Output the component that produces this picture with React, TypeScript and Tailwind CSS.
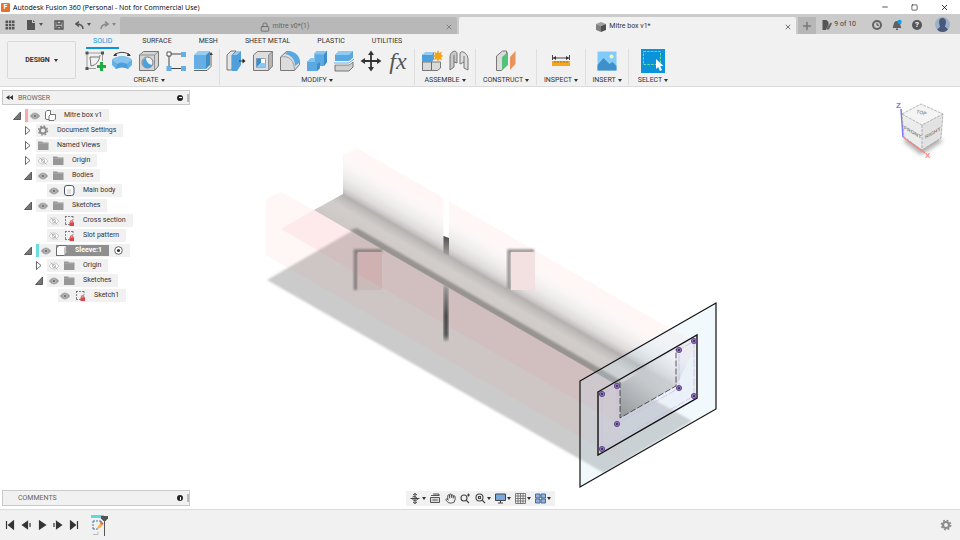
import { ReactNode } from 'react';
import { Hand, Lock, Minus, Plus, Square, X } from 'lucide-react';

const ribbonTabs = ['SOLID', 'SURFACE', 'MESH', 'SHEET METAL', 'PLASTIC', 'UTILITIES'];

function Caret() {
  return (
    <svg viewBox="0 0 4 3" className="h-[3px] w-1 shrink-0" fill="currentColor">
      <path d="M0 0h4L2 3z" />
    </svg>
  );
}

function Icon({ children }: { children: ReactNode }) {
  return (
    <svg viewBox="0 0 22 22" className="size-[22px]" fill="none" stroke="#6b6b6b" strokeWidth="0.9">
      {children}
    </svg>
  );
}

/* Ribbon icons */
const createIcons: [string, ReactNode][] = [
  ['Create Sketch', <Icon>
    <path d="M3.500 3h14M3 4v13M4 18.500h8M18.500 4v7" stroke="#777" strokeWidth="0.7" />
    <path d="M6 7l1 9c5-1 8-4 9-11M6 7h9" stroke="#666" />
    <path d="M1.500 1.500h3v3h-3zM17 1.500h3v3h-3zM1.500 17h3v3h-3z" fill="#555" stroke="none" />
    <path d="M17.500 12v9M13 16.500h9" stroke="#1fae3d" strokeWidth="3" />
  </Icon>],
  ['Revolve', <Icon>
    <path d="M1 10c4-5 16-5 20 0l-4 9c-4-2-8-2-12 0z" fill="#4b9fdc" stroke="none" />
    <path d="M1 10c4-5 16-5 20 0l-5 4c-4-2-7-2-10 0z" fill="#86c4ef" stroke="none" />
    <path d="M1 10l5 4-1 5-4-4zM21 10l-5 4 1 5 4-4z" fill="#66b0e6" stroke="none" />
    <path d="M3 5c5-3.500 11-3.500 16 0" stroke="#333" />
    <path d="M2 6l3-3 1 3zM20 6l-3-3-1 3z" fill="#333" stroke="none" />
  </Icon>],
  ['Hole', <Icon>
    <path d="M1.500 5l4-3.500h15V16l-4 4.500h-15z" fill="#d5d5d5" />
    <path d="M1.500 5h15v15.500M16.500 5l4-3.500" stroke="#888" />
    <circle cx="9.500" cy="12.500" r="5.500" fill="#e9f5fd" />
    <path d="M8 8c0 4 3 7 7 7-2 4-9 4-10 0-1-3 0-6 3-7z" fill="#4b9fdc" stroke="none" />
  </Icon>],
  ['Pattern', <Icon>
    <path d="M4 4h14M4 4v14M4 18.500h14" stroke="#333" />
    <path d="M2 2h4v4H2z" fill="#fff" stroke="#444" />
    <path d="M16 2h5v5h-5zM1.500 16h5v5h-5zM16 16h5v5h-5z" fill="#65afe7" stroke="none" />
  </Icon>],
  ['Extrude', <Icon>
    <path d="M2 20.500h13l4-4V4" stroke="#555" />
    <path d="M17 5l2-3 2 3z" fill="#444" stroke="none" />
    <path d="M2 5l4-4h12l-4 4z" fill="#93cdf3" stroke="none" />
    <path d="M2 5h12v14H2z" fill="#66aee3" stroke="none" />
    <path d="M14 5l4-4v14l-4 4z" fill="#408fc9" stroke="none" />
  </Icon>],
];

const modifyIcons: [string, ReactNode][] = [
  ['Press Pull', <Icon>
    <path d="M2 5l4-4h5L7 5v15H2z" fill="#e4e4e4" />
    <path d="M7 5l5-4h4v14l-4 6H7z" fill="#4f9fda" stroke="none" />
    <path d="M7 5l5-4h4l-4 4z" fill="#8fcbf3" stroke="none" />
    <path d="M14 11h4" stroke="#222" />
    <path d="M17.500 8.500l3 2.500-3 2.500z" fill="#222" stroke="none" />
  </Icon>],
  ['Shell', <Icon>
    <path d="M1.500 5l4-3.500h15V16l-4 4.500h-15z" fill="#dedede" />
    <path d="M16.500 5l4-3.500V16l-4 4.500z" fill="#b5b5b5" stroke="#888" />
    <path d="M4.500 8.500h9v9h-9z" fill="#fff" stroke="#999" />
    <path d="M4.500 8.500H9v4.500l-4.500 4.500z" fill="#3b8fd0" stroke="none" />
    <path d="M9 13h4.500v4.500h-9z" fill="#8ac7ee" stroke="none" />
  </Icon>],
  ['Fillet', <Icon>
    <path d="M1.500 7l6-5.500c7 0 13 5 13 13l-5 6h-14z" fill="#dcdcdc" />
    <path d="M6 4l3-3c7 0 12 5 12 11L16 16c0-7-4-11-10-12z" fill="#5aa8e1" stroke="none" />
    <path d="M1.500 7c9-2 14 4 14 13.500" stroke="#999" />
  </Icon>],
  ['Combine', <Icon>
    <path d="M1 12l4-4h3V4l3-3h10v11l-3 4h-4v2l-3 3H1z" fill="#5ba9e2" stroke="none" />
    <path d="M1 12l4-4h3V4l3-3h10l-3 3.500H9V12z" fill="#85c4ef" stroke="none" />
    <path d="M18 4.500L21 1v11l-3 4zM11 14l3-2v6l-3 3z" fill="#3e8dc9" stroke="none" />
  </Icon>],
  ['Split Body', <Icon>
    <path d="M2 5l4-4h14v7l-4 3H2z" fill="#5aa8e1" stroke="none" />
    <path d="M2 5l4-4h14l-4 4z" fill="#8fcbf3" stroke="none" />
    <path d="M2 15h14l4-3v5l-4 4H2z" fill="#d0d0d0" />
    <path d="M1 13h15l5-4" stroke="#fff" strokeWidth="2.500" />
    <path d="M1 13h15l5-4" stroke="#3e9ce0" />
  </Icon>],
  ['Move', <Icon>
    <path d="M11 3v16M3 11h16" stroke="#333" strokeWidth="1.800" />
    <path d="M11 0.500l3 4.500H8zM11 21.500l3-4.500H8zM0.500 11l4.500-3v6zM21.500 11l-4.500-3v6z" fill="#333" stroke="none" />
  </Icon>],
  ['Change Parameters', <span className="font-['Liberation_Serif',serif] text-2xl leading-[22px] text-[#555] italic">fx</span>],
];

const assembleIcons: [string, ReactNode][] = [
  ['New Component', <Icon>
    <path d="M1.500 12h9v8.500h-9zM10.500 12h9v6l-3 2.500h-6z" fill="#dadada" />
    <path d="M1 5l4-3h8v7l-2 3H1z" fill="#4f9fda" stroke="none" />
    <path d="M1 5l4-3h8l-2 3z" fill="#93cdf3" stroke="none" />
    <path d="M17 0l1.200 3L21 1.800 20 4.500l2.500 1.500L20 7.200l1 3-2.800-1.200L17 12l-1.200-3-2.800 1.200 1-3L11.500 6 14 4.500l-1-2.700L15.800 3z" fill="#f3a21b" stroke="none" />
  </Icon>],
  ['Joint', <Icon>
    <path d="M2 7c0-6 7-8 7-3v9l-3-1v5l-4 3z" fill="#c9c9c9" />
    <path d="M12 4c0-5 8-1 8 5v11l-4-2v-6l-4 2z" fill="#dedede" />
    <path d="M6 5v7M16 6v6" stroke="#666" />
  </Icon>],
];

const constructIcons: [string, ReactNode][] = [
  ['Offset Plane', <Icon>
    <path d="M1.500 6l6-5h4v14l-5 5.500h-5z" fill="#dcdcdc" />
    <path d="M7 7l6-5v13l-6 5.500z" fill="#54c27a" stroke="none" />
    <path d="M15 7l5.500-6v13L15 20z" fill="#e8935e" stroke="none" />
  </Icon>],
];
const inspectIcons: [string, ReactNode][] = [
  ['Measure', <Icon>
    <path d="M2.500 5v5M19.500 5v5M3 8h16" stroke="#333" />
    <path d="M3 8l3-2v4zM19 8l-3-2v4z" fill="#333" stroke="none" />
    <path d="M2 11h18v5H2z" fill="#f5a71d" stroke="none" />
    <path d="M5 11v2M8 11v2M11 11v2M14 11v2M17 11v2" stroke="#a06a08" />
  </Icon>],
];
const insertIcons: [string, ReactNode][] = [
  ['Insert Image', <Icon>
    <path d="M1.500 1.500h19v19h-19z" fill="#82caf8" stroke="none" />
    <path d="M1.500 15l6-7 6 6 3-2 4 4v4.500h-19z" fill="#3f8fca" stroke="none" />
    <circle cx="15.500" cy="6.500" r="2" fill="#fff5b8" stroke="none" />
  </Icon>],
];
const selectIcons: [string, ReactNode][] = [
  ['Select', <svg viewBox="0 0 24 24" className="size-6 shrink-0" fill="none">
    <path d="M0 0h24v24H0z" fill="#0a93d8" />
    <path d="M2.500 2.500h17v13h-17z" stroke="#6fdc9a" strokeDasharray="2.500 1.200" />
    <path d="M15 10v10l2.200-2 1.800 4 2-1-1.800-3.700 3.300-.3z" fill="#fff" />
  </svg>],
];

const ribbonGroups: { label: string; icons: [string, ReactNode][]; width: string }[] = [
  { label: 'CREATE', icons: createIcons, width: 'w-[141px]' },
  { label: 'MODIFY', icons: modifyIcons, width: 'w-[195px]' },
  { label: 'ASSEMBLE', icons: assembleIcons, width: 'w-[61px]' },
  { label: 'CONSTRUCT', icons: constructIcons, width: 'w-[61px]' },
  { label: 'INSPECT', icons: inspectIcons, width: 'w-[49px]' },
  { label: 'INSERT', icons: insertIcons, width: 'w-[43px]' },
  { label: 'SELECT', icons: selectIcons, width: 'w-[48px]' },
];

/* Browser tree icons */
function Eye({ off }: { off?: boolean }) {
  return (
    <svg viewBox="0 0 10 8" className="h-2 w-2.5 shrink-0" fill="none">
      <path d="M0.300 4C2.500 0 7.500 0 9.700 4 7.500 8 2.500 8 0.300 4z" fill={off ? '#fff' : '#a3a3a3'} stroke={off ? '#b3b3b3' : '#a3a3a3'} strokeWidth="0.7" />
      <circle cx="5" cy="4" r="1.700" fill={off ? 'none' : '#777'} stroke={off ? '#aaa' : '#c9c9c9'} strokeWidth="0.7" />
      {off && <path d="M1.500 0.500l7 7" stroke="#aaa" strokeWidth="0.8" />}
    </svg>
  );
}

function NodeIcon({ kind }: { kind: string }) {
  return (
    <svg viewBox="0 0 11 11" className="size-[11px] shrink-0" fill="none">
      {kind === 'folder' && (
        <>
          <path d="M0 1.500h4l1 1h5.500v7.500H0z" fill="#979797" />
          <path d="M0 3.300h10.500" stroke="#bbb" strokeWidth="0.5" />
        </>
      )}
      {kind === 'gear' && (
        <>
          <circle cx="5" cy="5.500" r="3" stroke="#8f8f8f" strokeWidth="2" />
          <circle cx="5" cy="5.500" r="4.500" stroke="#8f8f8f" strokeWidth="1.500" strokeDasharray="1.800 1.734" />
        </>
      )}
      {kind === 'component' && (
        <>
          <path d="M0.500 2L2 0.500h3.500v9H2L0.500 9z" fill="#fff" stroke="#555" strokeWidth="0.8" />
          <path d="M4 6l1.500-1.500h5V9L9 10.500H4z" fill="#fff" stroke="#555" strokeWidth="0.8" />
        </>
      )}
      {kind === 'body' && (
        <>
          <rect x="0.500" y="0.500" width="9.500" height="10" rx="2.500" fill="#fff" stroke="#4a5568" />
          <path d="M3 4h4v5H3z" fill="#e2e2e2" />
        </>
      )}
      {kind === 'box' && (
        <>
          <path d="M0.500 3L3 0.500h7.500v7l-2.500 3H0.500z" fill="#fff" stroke="#555" strokeWidth="0.8" />
          <path d="M8 3l2.500-2.500v7L8 10.500z" fill="#c5c5c5" />
        </>
      )}
      {kind === 'sketch' && (
        <>
          <path d="M1 1.500h8.500M1.500 1v8.500M1 9.500h5M9 1v4" stroke="#666" strokeWidth="0.8" strokeDasharray="2 1" />
          <path d="M5.500 7.300h4.500v3.700H5.500z" fill="#d9474b" />
          <path d="M6.700 7.500V5.800h2.100v1.700" stroke="#d9474b" />
        </>
      )}
    </svg>
  );
}

type Row = { label: string; indent: string; icon: string; arrow?: 'open' | 'closed'; eye?: 'on' | 'off'; bar?: string; active?: boolean };

const rows: Row[] = [
  { label: 'Mitre box v1', indent: 'pl-[11px]', icon: 'component', arrow: 'open', eye: 'on', bar: 'bg-[#f9a9ab]' },
  { label: 'Document Settings', indent: 'pl-[22px]', icon: 'gear', arrow: 'closed' },
  { label: 'Named Views', indent: 'pl-[22px]', icon: 'folder', arrow: 'closed' },
  { label: 'Origin', indent: 'pl-[22px]', icon: 'folder', arrow: 'closed', eye: 'off' },
  { label: 'Bodies', indent: 'pl-[22px]', icon: 'folder', arrow: 'open', eye: 'on' },
  { label: 'Main body', indent: 'pl-[33px]', icon: 'body', eye: 'on' },
  { label: 'Sketches', indent: 'pl-[22px]', icon: 'folder', arrow: 'open', eye: 'on' },
  { label: 'Cross section', indent: 'pl-[33px]', icon: 'sketch', eye: 'off' },
  { label: 'Slot pattern', indent: 'pl-[33px]', icon: 'sketch', eye: 'off' },
  { label: 'Sleeve:1', indent: 'pl-[22px]', icon: 'box', arrow: 'open', eye: 'on', bar: 'bg-[#6bdce0]', active: true },
  { label: 'Origin', indent: 'pl-[33px]', icon: 'folder', arrow: 'closed', eye: 'off' },
  { label: 'Sketches', indent: 'pl-[33px]', icon: 'folder', arrow: 'open', eye: 'on' },
  { label: 'Sketch1', indent: 'pl-11', icon: 'sketch', eye: 'on' },
];

function TreeRow({ row }: { row: Row }) {
  return (
    <li className={`flex h-[15px] items-center ${row.indent}`}>
      <span className="w-3 shrink-0">
        {row.arrow && (
          <svg viewBox="0 0 8 9" className="h-[9px] w-2" fill="none" stroke="#444" strokeWidth="0.8">
            {row.arrow === 'open' ? <path d="M7.500 1v7.500H0.500z" fill="#777" /> : <path d="M1.500 0.500v8L6 4.500z" fill="#fff" />}
          </svg>
        )}
      </span>
      {row.bar && <span className={`h-[13px] w-[3px] shrink-0 ${row.bar}`} />}
      <span className="flex h-[13px] items-center gap-[5px] bg-[#f1f1f1] pr-[7px] pl-0.5">
        {row.eye && <Eye off={row.eye === 'off'} />}
        <span className={row.active ? 'flex h-[11px] items-center gap-2 bg-[#8f8f8f] pr-[7px] font-bold text-white' : 'flex items-center gap-2'}>
          <NodeIcon kind={row.icon} />
          <span>{row.label}</span>
        </span>
        {row.active && (
          <svg viewBox="0 0 9 9" className="size-[9px]">
            <circle cx="4.500" cy="4.500" r="3.800" fill="#fff" stroke="#444" strokeWidth="0.8" />
            <circle cx="4.500" cy="4.500" r="1.600" fill="#333" />
          </svg>
        )}
      </span>
    </li>
  );
}

/* 3D model and sketch plane */
const sketchPoints = [[602, 394], [617, 386], [679, 350], [694, 341], [694, 396], [679, 388], [617, 424], [602, 449]];

function Scene() {
  return (
    <svg viewBox="0 87 960 422" preserveAspectRatio="xMidYMid slice" className="absolute inset-0 size-full" fill="none">
      <defs>
        {/* runs square to the long edges, wall top to floor edge */}
        <linearGradient id="channel" gradientUnits="userSpaceOnUse" x1="343" y1="140" x2="305.300" y2="205.300">
          <stop offset="0" stopColor="#fff6f6" />
          <stop offset="0.190" stopColor="#fff7f7" />
          <stop offset="0.280" stopColor="#faf6f6" />
          <stop offset="0.420" stopColor="#eeebeb" />
          <stop offset="0.530" stopColor="#dfdbdb" />
          <stop offset="0.590" stopColor="#cbc6c6" />
          <stop offset="0.630" stopColor="#b5b1b0" />
          <stop offset="0.690" stopColor="#c2bebb" />
          <stop offset="0.780" stopColor="#d1cdca" />
          <stop offset="0.900" stopColor="#d0cbc8" />
          <stop offset="1" stopColor="#cbc7c4" />
        </linearGradient>
        <linearGradient id="slotTop" x1="0" y1="0" x2="0" y2="1">
          <stop offset="0" stopColor="#4d4d4d" />
          <stop offset="1" stopColor="#a8a4a3" />
        </linearGradient>
        <linearGradient id="slotFront" x1="0" y1="0" x2="0" y2="1">
          <stop offset="0" stopColor="#9d9a99" />
          <stop offset="0.550" stopColor="#474747" />
          <stop offset="0.900" stopColor="#555" />
          <stop offset="1" stopColor="#aaa" />
        </linearGradient>
        <linearGradient id="inside" gradientUnits="userSpaceOnUse" x1="622" y1="410" x2="668" y2="352">
          <stop offset="0" stopColor="#85898b" stopOpacity="0.7" />
          <stop offset="0.500" stopColor="#c0c3c5" stopOpacity="0.6" />
          <stop offset="1" stopColor="#f5f7f9" stopOpacity="0.6" />
        </linearGradient>
        <filter id="soft"><feGaussianBlur stdDeviation="1.200" /></filter>
        <filter id="soft2"><feGaussianBlur stdDeviation="0.8" /></filter>
        <clipPath id="floorEdge"><path d="M314 200H640V398.500L314 210Z" /></clipPath>
      </defs>

      {/* ground shadow */}
      <path d="M267 280L350 232L357 229L364 232L620 381L692 421L604 473Z" fill="#cbcbcb" filter="url(#soft2)" />

      {/* back wall and floor */}
      <path d="M314 210L343 194V155L357 148L697 344L676 386L620 418V387Z" fill="url(#channel)" />
      <g clipPath="url(#floorEdge)">
        <path d="M350 230L357 228L620 380V388L359 237Z" fill="#8c8987" fillOpacity="0.85" filter="url(#soft)" />
      </g>

      {/* front wall, seen through */}
      <path d="M266 199L281 192L314 210L620 387V459L598 447L266 255Z" fill="#ff8080" fillOpacity="0.07" />
      <path d="M281 229L314 210L620 387V425Z" fill="#f07878" fillOpacity="0.09" />

      {/* saw slots */}
      <path d="M443.500 190H449V238L443.500 236Z" fill="#fff" />
      <path d="M443.500 236L449 238V256L443.500 253Z" fill="url(#slotTop)" />
      <path d="M443.500 285L448.500 288V341H443.500Z" fill="url(#slotFront)" filter="url(#soft2)" />
      <path d="M355.500 290V251H382" stroke="#857f7e" strokeWidth="3.500" filter="url(#soft)" />
      <path d="M358 252H382V288L358 275Z" fill="#cfb1b1" />
      <path d="M358 275L382 288V290H358Z" fill="#cbbaba" />
      <path d="M509 289V251H534" stroke="#999494" strokeWidth="3.500" filter="url(#soft)" />
      <path d="M511 252H535V290H511Z" fill="#f3e0e0" />

      {/* construction plane */}
      <path d="M580 381L716 303V409L580 487Z" fill="#c3e4f8" fillOpacity="0.24" />
      <path d="M598 392L697 335V398L598 455Z" fill="#d9d4e4" fillOpacity="0.2" />
      <path d="M620 384L676 350V386L620 418Z" fill="url(#inside)" />
      <path d="M602 394V449L694 396V341L679 350V388L617 424V386Z" stroke="#c8bcea" strokeWidth="0.8" strokeDasharray="8 1.500" />
      <path d="M620 382V418L676 386V349" stroke="#333" strokeWidth="0.8" strokeDasharray="6 2" />
      <path d="M580 381L716 303V409L580 487Z" stroke="#111" strokeWidth="1.200" />
      <path d="M598 392L697 335V398L598 455Z" stroke="#111" strokeWidth="1.400" />
      {sketchPoints.map(([x, y]) => (
        <g key={`${x}-${y}`}>
          <circle cx={x} cy={y} r="2.600" fill="#9078bd" stroke="#5d3f8a" strokeWidth="0.9" />
          <circle cx={x} cy={y} r="1" fill="#33204f" />
        </g>
      ))}
    </svg>
  );
}

function ViewCube() {
  return (
    <svg viewBox="885 90 70 80" className="h-20 w-[70px]" fill="none" fontFamily="Liberation Sans, sans-serif">
      <defs>
        <filter id="cubeShade"><feGaussianBlur stdDeviation="2" /></filter>
      </defs>
      <path d="M903 141L921 155L943 141L921 127Z" fill="#b0b0b0" filter="url(#cubeShade)" />
      <path d="M901 109L903 137" stroke="#7676ff" strokeWidth="1.500" />
      <path d="M903 137L925 153" stroke="#ff8080" strokeWidth="1.500" />
      <path d="M902 114L921 104L943 114L922 125Z" fill="#f4f4f4" />
      <path d="M902 114L922 125V150L904 137Z" fill="#ececec" />
      <path d="M943 114L922 125V150L941 138Z" fill="#e2e2e2" />
      <path d="M902 114L921 104L943 114L941 138L922 150L904 137ZM902 114L922 125L943 114M922 125V150" stroke="#999" strokeWidth="0.7" strokeDasharray="3 1" />
      <text transform="translate(904 129) skewY(30)" fontSize="5" fontWeight="bold" fill="#888">FRONT</text>
      <text transform="translate(925 139) skewY(-29)" fontSize="5" fontWeight="bold" fill="#888">RIGHT</text>
      <text transform="translate(916 113) rotate(14)" fontSize="5" fontWeight="bold" fill="#999">TOP</text>
      <text x="896" y="108" fontSize="8" fontWeight="bold" fill="#7777f7">Z</text>
      <text x="925" y="158" fontSize="8" fontWeight="bold" fill="#ff8585">X</text>
    </svg>
  );
}

/* Bottom navigation bar */
const navTools: [string, boolean, ReactNode][] = [
  ['Orbit', true, <path d="M5 0.500v10M0.500 5.500h9M3 2l2-1.500L7 2M3 9l2 1.500L7 9M2.500 4c2-1 4 0 5 1.500s-3 3-5 1" stroke="#444" />],
  ['Look At', false, <path d="M0.500 4.500h9v5h-9zM2.500 7h5M1 2.500h8M3 1h6v2" stroke="#555" fill="#d8d8d8" />],
  ['Pan', false, <Hand x="0" y="0" width="11" height="11" color="#444" />],
  ['Zoom', false, <path d="M7 5a3 3 0 1 1-6 0a3 3 0 0 1 6 0M6 7l3 3M8.500 0.500v3M7 2h3" stroke="#444" strokeWidth="1.100" />],
  ['Fit', true, <path d="M8 4.500a3.500 3.500 0 1 1-7 0a3.500 3.500 0 0 1 7 0M7 7l3 3M3.500 3.500h2v2h-2z" stroke="#444" strokeWidth="1.100" />],
  ['Display Settings', true, <><path d="M0.500 1h10v6.500h-10z" fill="#79a8dc" stroke="#444" /><path d="M3 10h5M5.500 8v2" stroke="#444" /></>],
  ['Grid and Snaps', true, <path d="M0.500 0.500h10v10h-10zM3 0v11M5.500 0v11M8 0v11M0 3h11M0 5.500h11M0 8h11" stroke="#666" strokeWidth="0.8" />],
  ['Viewports', true, <path d="M0.500 1h4.500v4H0.500zM6 1h4.500v4H6zM0.500 6h4.500v4H0.500zM6 6h4.500v4H6z" fill="#8fb4e0" stroke="#3f5f90" strokeWidth="0.9" />],
];

const playback: [string, string][] = [
  ['Go to start', 'M1.500 1v8M8.500 1v8L3.500 5z'],
  ['Step back', 'M6.500 1.500L1.500 5l5 3.500zM9 3v4'],
  ['Play', 'M2.500 1v8L8.500 5z'],
  ['Step forward', 'M3.500 1.500l5 3.500-5 3.500zM1 3v4'],
  ['Go to end', 'M8.500 1v8M1.500 1v8l5-4z'],
];

function Gear() {
  return (
    <svg viewBox="0 0 12 12" className="size-3" fill="none" stroke="#8c8c8c">
      <circle cx="6" cy="6" r="3" strokeWidth="2.200" />
      <circle cx="6" cy="6" r="4.600" strokeWidth="1.600" strokeDasharray="1.900 1.713" />
    </svg>
  );
}

export default function App() {
  return (
    <div className="flex h-screen flex-col overflow-hidden bg-white font-[Roboto,sans-serif] text-[7px] leading-[9px] text-[#333]">
      {/* Window title */}
      <header className="flex h-3.5 shrink-0 items-center pr-[11px] pl-px">
        <span className="flex size-[9px] items-center justify-center rounded-[1px] bg-[#e8702a] font-bold text-white">F</span>
        <h1 className="ml-[3px] font-['Open_Sans',sans-serif] text-[7px] text-black">Autodesk Fusion 360 (Personal - Not for Commercial Use)</h1>
        <div className="ml-auto flex items-center gap-[22px] text-black">
          <button aria-label="Minimize"><Minus className="size-2" /></button>
          <button aria-label="Maximize"><Square className="size-[7px]" /></button>
          <button aria-label="Close"><X className="size-[9px]" /></button>
        </div>
      </header>

      {/* Document tabs */}
      <div className="flex h-5 shrink-0 items-end bg-[#cbcbcb]">
        <div className="flex h-[17px] w-[120px] shrink-0 items-center pb-0.5 pl-[5px] text-[#555]">
          <button aria-label="Data panel" className="mr-3">
            <svg viewBox="0 0 10 10" className="size-2.5" fill="currentColor">
              <path d="M0.500 0.500h2.500v2.500H0.500zM3.800 0.500h2.500v2.500H3.800zM7 0.500h2.500v2.500H7zM0.500 3.800h2.500v2.500H0.500zM3.800 3.800h2.500v2.500H3.800zM7 3.800h2.500v2.500H7zM0.500 7h2.500v2.500H0.500zM3.800 7h2.500v2.500H3.800zM7 7h2.500v2.500H7z" />
            </svg>
          </button>
          <button aria-label="File" className="mr-[7px] flex items-center gap-0.5">
            <svg viewBox="0 0 10 10" className="size-2.5" fill="currentColor"><path d="M0 0h5v3h3v7H0z M6 0l2 2H6z" /></svg>
            <Caret />
          </button>
          <button aria-label="Save" className="mr-[11px] ml-1">
            <svg viewBox="0 0 10 10" className="size-2.5" fill="none" stroke="currentColor" strokeWidth="1.400">
              <path d="M1 1h8v8H1zM3 1v3h4V1M3 9V6.500h4V9" />
            </svg>
          </button>
          <button aria-label="Undo" className="mr-[9px] flex items-center gap-[3px]">
            <svg viewBox="0 0 9 8" className="h-2 w-[9px]" fill="none" stroke="currentColor" strokeWidth="1.500"><path d="M4 0.500L1 3l3 2.500M1 3c4 0 7 1 7 5" /></svg>
            <Caret />
          </button>
          <button aria-label="Redo" className="flex items-center gap-[3px] text-[#888]">
            <svg viewBox="0 0 9 8" className="h-2 w-[9px]" fill="none" stroke="currentColor" strokeWidth="1.500"><path d="M5 0.500L8 3 5 5.500M8 3c-4 0-7 1-7 5" /></svg>
            <Caret />
          </button>
        </div>
        <div className="mr-0.5 flex h-[17px] flex-1 items-center justify-center rounded-t-[2px] bg-[#b8b8b8] px-1 pt-0.5 text-[#666]">
          <span className="flex flex-1 items-center justify-center gap-[3px]"><Lock className="size-2.5" />mitre v0*(1)</span>
          <button aria-label="Close mitre v0"><X className="size-2" /></button>
        </div>
        <div className="mr-0.5 flex h-[17px] flex-1 items-center justify-center rounded-t-[2px] bg-[#f1f1f1] px-1 pt-0.5">
          <span className="flex flex-1 items-center justify-center gap-[3px]">
            <svg viewBox="0 0 10 10" className="size-2.5"><path d="M0 2l5-2 5 2-5 2z" fill="#a0a0a0" /><path d="M0 2l5 2v6L0 8z" fill="#808080" /><path d="M10 2L5 4v6l5-2z" fill="#4f4f4f" /></svg>
            Mitre box v1*
          </span>
          <button aria-label="Close Mitre box"><X className="size-2" /></button>
        </div>
        <button aria-label="New tab" className="flex h-[17px] w-[18px] items-center justify-center bg-[#b7b7b7] text-[#777]"><Plus className="size-3" strokeWidth={3} /></button>
        <div className="flex h-[17px] w-36 shrink-0 items-center justify-end pr-2.5 pb-0.5 text-[#444]">
          <button className="mr-4 flex items-center gap-0.5">
            <svg viewBox="0 0 10 10" className="size-2.5"><path d="M0.500 0h4l2 2v3L4 10H0.500z" fill="#555" /><path d="M5 8l3.500-5.500 1.500 1L7 9.500H5z" fill="#666" /></svg>
            9 of 10
          </button>
          <button aria-label="Job status" className="mr-2.5">
            <svg viewBox="0 0 10 10" className="size-2.5" fill="none"><circle cx="5" cy="5" r="5" fill="#626262" /><circle cx="5" cy="5" r="3" fill="#ccc" /><path d="M5 3v2.200h2" stroke="#444" /></svg>
          </button>
          <button aria-label="Notifications" className="mr-2.5">
            <svg viewBox="0 0 10 11" className="h-[11px] w-2.5"><path d="M0.500 9C2 7 1 2 5 2s3 5 4.500 7zM4 9.500h2V11H4z" fill="#5f5f5f" /><circle cx="7.500" cy="3" r="2.200" fill="#159be0" /></svg>
          </button>
          <button aria-label="Help" className="mr-[13px] flex size-2.5 items-center justify-center rounded-full bg-[#555] text-[8px] font-bold text-white">?</button>
          <button aria-label="Account" className="size-[15px] overflow-hidden rounded-full bg-[#9bb0ca]">
            <svg viewBox="0 0 15 15"><path d="M5 2c2-2 6-1 6 3 0 2-1 3-1 5 2 1 3 1 3 5H2c0-4 2-4 3-5 0-2-2-5 0-8z" fill="#48597a" /></svg>
          </button>
        </div>
      </div>

      {/* Ribbon */}
      <div className="flex h-[53px] shrink-0 border-b border-[#dcdcdc] bg-[#f1f1f1]">
        <button className="mt-[7px] mr-[3px] ml-[7px] flex h-[38px] w-[69px] items-center justify-center gap-1 rounded-[2px] border border-[#d8d8d8] text-[7px] font-bold">
          DESIGN <Caret />
        </button>
        <div>
          <nav className="flex h-[15px] pl-[7px]">
            {ribbonTabs.map((tab, i) => (
              <a key={tab} href="#" className={i === 0 ? 'mr-4 border-b-2 border-[#0a95dc] px-[7px] pt-[3px] text-[#0a95dc]' : 'mr-[13px] px-[7px] pt-[3px]'}>
                {tab}
              </a>
            ))}
          </nav>
          <div className="flex">
            {ribbonGroups.map((group) => (
              <section key={group.label} className={`flex flex-col items-center ${group.width} border-r border-[#dedede] last:border-r-0`}>
                <div className="flex h-6 items-center gap-[5px]">
                  {group.icons.map(([name, icon]) => (
                    <button key={name} aria-label={name} className="flex size-[22px] items-center justify-center">{icon}</button>
                  ))}
                </div>
                <button className="mt-[3px] flex items-center gap-0.5">{group.label} <Caret /></button>
              </section>
            ))}
          </div>
        </div>
      </div>

      {/* Viewport */}
      <main className="relative flex-1">
        <Scene />
        <div className="relative flex h-full flex-col justify-between">
          <div className="flex justify-between pt-[3px] pl-0.5">
            <aside className="w-[188px]">
              <div className="flex h-[15px] items-center border border-[#c9c9c9] bg-[#f1f1f1] pl-[3px]">
                <svg viewBox="0 0 7 5" className="h-[5px] w-[7px]" fill="#333"><path d="M3.500 0v5L0 2.500zM7 0v5L3.500 2.500z" /></svg>
                <h2 className="ml-[5px] pt-px text-[#666]">BROWSER</h2>
                <button aria-label="Collapse browser" className="mr-1 ml-auto flex size-1.5 items-center justify-center rounded-full bg-[#222]"><span className="h-px w-[3px] bg-white" /></button>
                <span className="h-2 w-0.5 border-x border-[#bbb]" />
              </div>
              <ul className="pt-[3px]">
                {rows.map((row, i) => <TreeRow key={i} row={row} />)}
              </ul>
            </aside>
            <div className="pr-[5px]"><ViewCube /></div>
          </div>
          <div className="grid grid-cols-[188px_1fr_188px] items-end px-0.5 pb-[3px]">
            <div className="flex h-4 items-center border border-[#c9c9c9] bg-[#f1f1f1] pl-[15px]">
              <h2 className="text-[#666]">COMMENTS</h2>
              <button aria-label="Add comment" className="mr-1 ml-auto flex size-1.5 items-center justify-center rounded-full bg-[#222]"><span className="h-[3px] w-px bg-white" /></button>
              <span className="h-2 w-0.5 border-x border-[#bbb]" />
            </div>
            <div className="flex h-[15px] items-center justify-between justify-self-center bg-[#f1f1f1] px-0.5">
              {navTools.map(([name, menu, icon]) => (
                <button key={name} aria-label={name} className="flex items-center gap-px px-[2px]">
                  <svg viewBox="0 0 11 11" className="size-[11px]" fill="none">{icon}</svg>
                  {menu && <Caret />}
                </button>
              ))}
            </div>
          </div>
        </div>
      </main>

      {/* Timeline */}
      <footer className="flex h-[31px] shrink-0 items-center border-t border-[#dcdcdc] bg-[#f1f1f1] pr-2 pl-[5px]">
        <div className="flex gap-1.5">
          {playback.map(([name, path]) => (
            <button key={name} aria-label={name}>
              <svg viewBox="0 0 10 10" className="size-2.5" fill="#333" stroke="#333" strokeWidth="1.200"><path d={path} /></svg>
            </button>
          ))}
        </div>
        <button aria-label="Sketch1 feature" className="ml-3">
          <svg viewBox="0 0 17 22" className="h-[22px] w-[17px]" fill="none">
            <path d="M0 1h13v3H0z" fill="#5fd9dd" />
            <path d="M2 7h9M2 7v9M2 15h5M10 7v4" stroke="#4d6f9e" strokeDasharray="2 1" />
            <path d="M6 15l1-3 3-3 2 2-3 3z" fill="#efb64a" />
            <path d="M9 9l1.500-1.500 2 2L11 11z" fill="#e05c56" />
            <path d="M2 20.500h5V18" stroke="#bbb" />
            <path d="M10 2h7v2.500L14.500 7h-2L10 4.500z" fill="#555" />
            <path d="M13.500 5v17" stroke="#555" />
          </svg>
        </button>
        <button aria-label="Timeline settings" className="ml-auto"><Gear /></button>
      </footer>
    </div>
  );
}
